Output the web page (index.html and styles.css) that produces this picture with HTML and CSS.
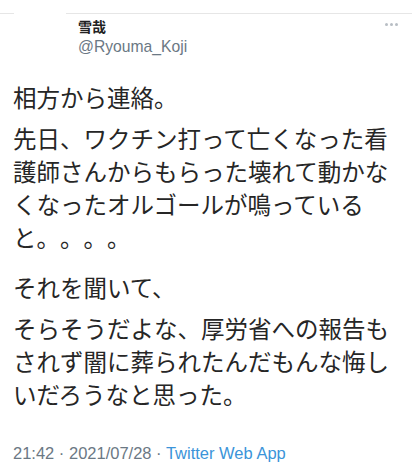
FILE: index.html
```html
<!DOCTYPE html>
<html lang="ja">
<head>
    <meta charset="UTF-8">
    <meta name="viewport" content="width=device-width, initial-scale=1.0">
    <title>雪哉 on Twitter</title>
    <link rel="stylesheet" href="styles.css">
</head>
<body>
    <div class="tweet">
        <div class="rule">
            <span class="rule-left"></span>
            <span class="rule-right"></span>
        </div>

        <div class="author">
            <div class="names">
                <div class="name">雪哉</div>
                <div class="handle">@Ryouma_Koji</div>
            </div>
            <div class="more">
                <span></span><span></span><span></span>
            </div>
        </div>

        <div class="text">
            <p>相方から連絡。</p>
            <p class="wide">先日、ワクチン打って亡くなった看護師さんからもらった壊れて動かなくなったオルゴールが鳴っていると。。。。</p>
            <p>それを聞いて、</p>
            <p>そらそうだよな、厚労省への報告もされず闇に葬られたんだもんな悔しいだろうなと思った。</p>
        </div>

        <div class="meta">
            21:42 · 2021/07/28 · <span class="source">Twitter Web App</span>
        </div>
    </div>
</body>
</html>
```

FILE: styles.css
```css
body {
    margin: 0;
    padding: 0;
    background-color: #fff;
    font-family: "Liberation Sans", "Noto Sans CJK JP", sans-serif;
    color: #1c1c1c;
}

.tweet {
    width: 417px;
    padding-top: 13px;
}

.rule {
    display: flex;
    gap: 52px;
    height: 1px;
    padding-right: 5px;
}

.rule-left {
    width: 14px;
    background-color: #e6e6e6;
}

.rule-right {
    flex: 1;
    background-color: #e6e6e6;
}

.author {
    display: flex;
    justify-content: space-between;
    padding: 2px 19px 0 78px;
}

.name {
    font-family: "Noto Sans CJK JP", sans-serif;
    font-weight: bold;
    font-size: 14px;
    line-height: 20px;
    color: #222;
}

.handle {
    font-size: 15.7px;
    line-height: 20px;
    color: #6b7884;
    margin-top: 1px;
}

.more {
    display: flex;
    gap: 2px;
    padding-top: 7px;
}

.more span {
    width: 3px;
    height: 3px;
    border-radius: 50%;
    background-color: #b8bec4;
}

.text {
    padding: 24px 14px 0 13px;
    font-family: "Noto Sans CJK JP", sans-serif;
    font-size: 23.5px;
    line-height: 33px;
    color: #262626;
    text-spacing-trim: space-all;
}

.text p {
    margin: 0 0 8px 0;
}

.text p.wide {
    margin-bottom: 17px;
}

.meta {
    padding: 24px 13px 0;
    font-size: 16.5px;
    line-height: 20px;
    color: #6b7884;
}

.source {
    color: #3b94d9;
}
```
